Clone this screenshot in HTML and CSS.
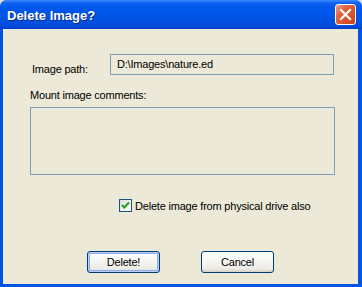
FILE: index.html
```html
<!DOCTYPE html>
<html lang="en">

<head>
    <meta charset="UTF-8">
    <title>Delete Image?</title>
    <link rel="stylesheet" href="styles.css">
</head>

<body>
    <div class="window">
        <div class="titlebar">
            <span class="title">Delete Image?</span>
            <button class="close-btn" type="button" aria-label="Close">
                <svg width="13" height="13" viewBox="0 0 13 13">
                    <path d="M2 2 L11 11 M11 2 L2 11" stroke="#fff" stroke-width="2.2" stroke-linecap="square" />
                </svg>
            </button>
        </div>

        <div class="dialog-body">
            <div class="path-row">
                <label class="path-label">Image path:</label>
                <div class="path-field">D:\Images\nature.ed</div>
            </div>

            <div class="comments-label">Mount image comments:</div>
            <div class="comments-box"></div>

            <div class="check-row">
                <span class="checkbox">
                    <svg width="11" height="11" viewBox="0 0 11 11">
                        <path d="M2 5 L4.3 7.5 L9 2.5" fill="none" stroke="#21a121" stroke-width="2" />
                    </svg>
                </span>
                <span class="check-text">Delete image from physical drive also</span>
            </div>

            <div class="button-row">
                <button type="button" class="xp-btn default">Delete!</button>
                <button type="button" class="xp-btn">Cancel</button>
            </div>
        </div>
    </div>
</body>

</html>
```

FILE: styles.css
```css
* {
    margin: 0;
    padding: 0;
    box-sizing: border-box;
}

body {
    font-family: 'Liberation Sans', Arial, sans-serif;
    font-size: 11px;
    letter-spacing: -0.2px;
    background: #dcdcdc;
    width: 362px;
    height: 287px;
}

.window {
    width: 362px;
    height: 287px;
    display: flex;
    flex-direction: column;
    border-radius: 7px 7px 0 0;
    overflow: hidden;
    background: #0054e3;
}

/* title bar */
.titlebar {
    height: 29px;
    display: flex;
    align-items: center;
    justify-content: space-between;
    padding: 0 6px 0 7px;
    background: linear-gradient(#3c8dff 0, #0f62f2 3px, #0058ee 7px, #0054e6 60%, #004cdc 88%, #0040cc 100%);
}

.title {
    color: #fff;
    font-weight: bold;
    font-size: 13px;
    letter-spacing: 0;
    text-shadow: 1px 1px #0b2a8a;
    padding-top: 1px;
}

.close-btn {
    width: 21px;
    height: 21px;
    border: 1px solid #fff;
    border-radius: 3px;
    background: linear-gradient(135deg, #ee9a7c 0%, #e0633c 35%, #cc4318 100%);
    display: flex;
    align-items: center;
    justify-content: center;
}

/* content */
.dialog-body {
    flex: 1;
    margin: 0 4px 3px 3px;
    background: #ece9d8;
    padding: 0 23px 0 27px;
    color: #000;
}

.path-row {
    display: flex;
    margin-top: 25px;
    height: 21px;
}

.path-label {
    width: 80px;
    padding-left: 2px;
    align-self: flex-end;
    line-height: 13px;
    margin-bottom: -1px;
}

.path-field {
    width: 224px;
    height: 21px;
    border: 1px solid #7f9db9;
    padding: 0 6px;
    line-height: 19px;
}

.comments-label {
    margin-top: 14px;
    line-height: 13px;
}

.comments-box {
    margin-top: 5px;
    width: 305px;
    height: 68px;
    border: 1px solid #7f9db9;
}

.check-row {
    display: flex;
    align-items: center;
    margin-top: 24px;
    padding-left: 89px;
    height: 13px;
}

.checkbox {
    width: 13px;
    height: 13px;
    border: 1px solid #1c5180;
    background: linear-gradient(135deg, #dcdcd7, #fff);
    display: flex;
    align-items: center;
    justify-content: center;
    margin-right: 3px;
}

.button-row {
    display: flex;
    gap: 41px;
    margin-top: 39px;
    padding-left: 57px;
}

.xp-btn {
    width: 73px;
    height: 22px;
    font-family: inherit;
    font-size: 11px;
    letter-spacing: inherit;
    color: #000;
    border: 1px solid #003c74;
    border-radius: 3px;
    background: linear-gradient(#ffffff 0, #f6f6f3 40%, #ecebe6 85%, #d6d0c5 100%);
}

.xp-btn.default {
    box-shadow: inset 0 0 0 1px #bccef5, inset 0 0 0 2px #89adec;
}
```
